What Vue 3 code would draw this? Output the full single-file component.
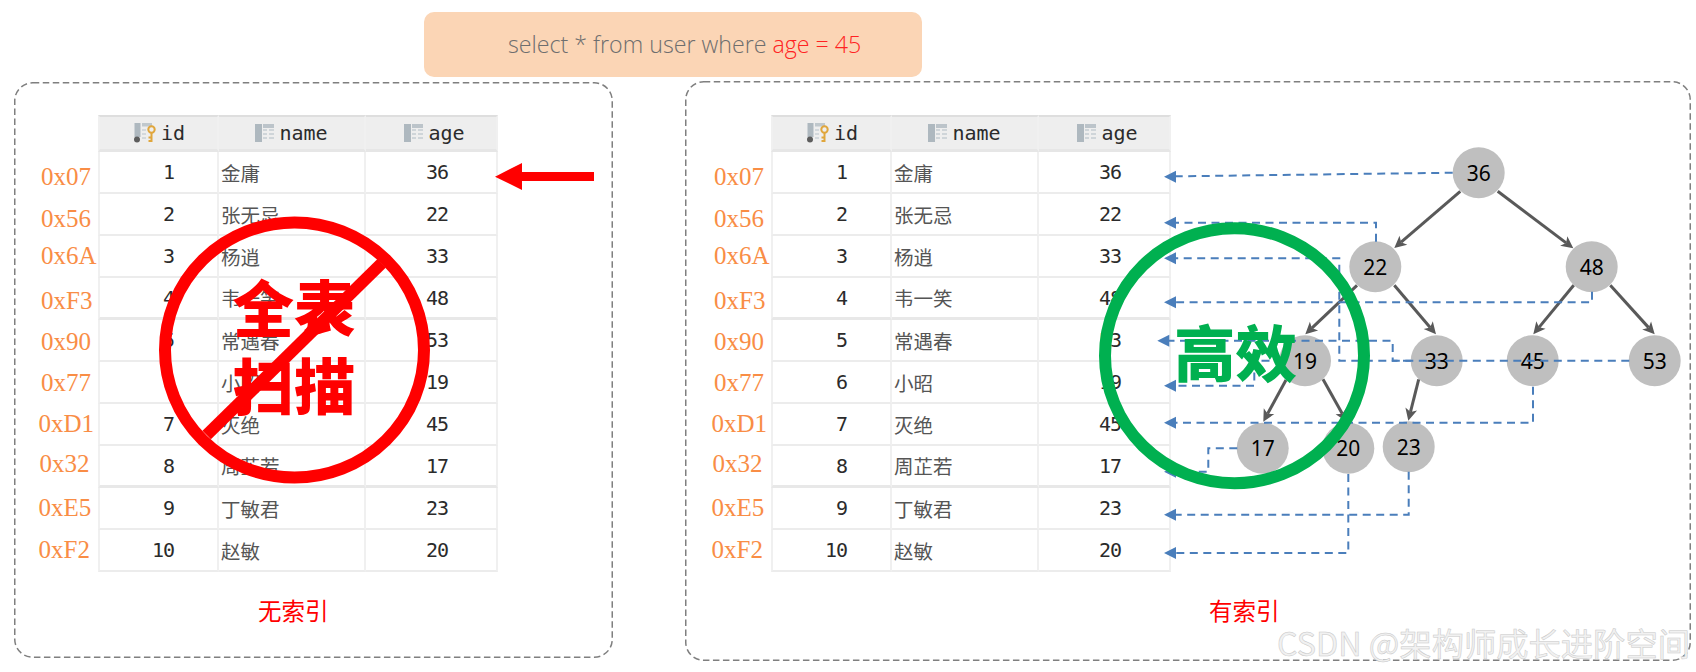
<script setup>
const rows = [
  { id: 1, name: '金庸', age: 36, addr: '0x07', lx: 41, cy: 177 },
  { id: 2, name: '张无忌', age: 22, addr: '0x56', lx: 41, cy: 219 },
  { id: 3, name: '杨逍', age: 33, addr: '0x6A', lx: 41, cy: 256 },
  { id: 4, name: '韦一笑', age: 48, addr: '0xF3', lx: 41, cy: 301 },
  { id: 5, name: '常遇春', age: 53, addr: '0x90', lx: 41, cy: 342 },
  { id: 6, name: '小昭', age: 19, addr: '0x77', lx: 41, cy: 383 },
  { id: 7, name: '灭绝', age: 45, addr: '0xD1', lx: 38.5, cy: 424 },
  { id: 8, name: '周芷若', age: 17, addr: '0x32', lx: 39.5, cy: 464 },
  { id: 9, name: '丁敏君', age: 23, addr: '0xE5', lx: 38.5, cy: 508 },
  { id: 10, name: '赵敏', age: 20, addr: '0xF2', lx: 38.5, cy: 550 }
]
const labels = rows.map(r => ({ text: r.addr, style: { left: r.lx - 98 + 'px', top: r.cy - 115 - 15 + 'px' } }))

const nodes = [
  { t: 36, x: 1478.7, y: 172.7 }, { t: 22, x: 1375.3, y: 266.7 }, { t: 48, x: 1591.7, y: 266.7 },
  { t: 19, x: 1305, y: 360.7 }, { t: 33, x: 1436.7, y: 360.7 }, { t: 45, x: 1532.7, y: 360.7 },
  { t: 53, x: 1654.7, y: 360.7 }, { t: 17, x: 1262.7, y: 448.3 }, { t: 20, x: 1348.3, y: 448.3 },
  { t: 23, x: 1408.7, y: 446.7 }
]

const edgeData = [
  [1460.3, 191.3, 1394.3, 248], [1497.7, 191.3, 1573.3, 248.3], [1357, 285.3, 1305.3, 334.3],
  [1394.3, 285.3, 1436, 334.3], [1573.7, 285.3, 1533.3, 334.3], [1610.3, 285.3, 1654.7, 334.3],
  [1286, 380, 1263.3, 421.7], [1323, 379.3, 1346.7, 421.7], [1418.7, 379.3, 1408.3, 420.7]
]
const edges = edgeData.map(([x1, y1, x2, y2]) => {
  const d = Math.hypot(x2 - x1, y2 - y1)
  const ux = (x2 - x1) / d
  const uy = (y2 - y1) / d
  const bx = x2 - ux * 12
  const by = y2 - uy * 12
  return {
    line: { x1, y1, x2: x2 - ux * 9, y2: y2 - uy * 9 },
    head: `${x2},${y2} ${bx - uy * 6},${by + ux * 6} ${x2 - ux * 9},${y2 - uy * 9} ${bx + uy * 6},${by - ux * 6}`
  }
})

const linkData = [
  '1452.7,172.7 1172,176.4',
  '1376,241.7 1376,222.7 1172,222.7',
  '1629.3,360.7 1339.3,360.7 1339.3,258.3 1172,258.3',
  '1592,291.7 1592,302.3 1172,302.3',
  '1411,360.7 1392.7,360.7 1392.7,340.7 1165,340.7',
  '1283,360.7 1254.3,360.7 1254.3,385.7 1172,385.7',
  '1533,386.7 1533,422.7 1172,422.7',
  '1237.3,448.3 1208.3,448.3 1208.3,471.7 1172,471.7',
  '1408.7,471.7 1408.7,514.7 1172,514.7',
  '1348.3,474 1348.3,553 1172,553'
]
const tips = [
  [1164, 176.7], [1164, 222.7], [1164, 258.3], [1164, 302.3], [1157.3, 340.7],
  [1164, 385.7], [1164, 422.7], [1164, 471.7], [1164, 514.7], [1164, 553]
]
const tipPolys = tips.map(([x, y]) => `${x},${y} ${x + 12},${y - 6} ${x + 12},${y + 6}`)
</script>

<template>
  <div class="page">
    <div class="sql">select * from user where <span class="hot">age = 45</span></div>

    <div class="panels">
      <section class="panel panel-left">
        <svg class="frame" width="599" height="576"><rect x="0.75" y="0.75" width="597.5" height="574.5" rx="18" /></svg>
        <div class="table-wrap">
          <span v-for="l in labels" :key="l.text" class="addr" :style="l.style">{{ l.text }}</span>
          <div class="tbl">
            <div class="cell head head-id">
              <svg class="ico" width="22" height="20" viewBox="0 0 22 20">
                <rect x="0.5" y="0" width="6" height="14" fill="#aeb8bf" />
                <rect x="8" y="0" width="10" height="3.5" fill="#c0c8cd" />
                <rect x="8" y="6" width="4" height="2" fill="#d3d8dc" />
                <rect x="8" y="10" width="4" height="2" fill="#d3d8dc" />
                <rect x="8" y="14" width="4" height="2" fill="#d3d8dc" />
                <circle cx="3" cy="16.5" r="3" fill="#5d5d5d" />
                <circle cx="17.5" cy="6.5" r="3.2" fill="none" stroke="#e0a63c" stroke-width="2" />
                <path d="M17.5 9.5V19M17.5 14.5H14.5M17.5 18H14.5" fill="none" stroke="#e0a63c" stroke-width="2" />
              </svg>
              id
            </div>
            <div class="cell head">
              <svg class="ico" width="19" height="18" viewBox="0 0 19 18">
                <rect width="7" height="18" fill="#aeb8bf" />
                <rect x="8" width="11" height="4" fill="#bcc4ca" />
                <path d="M8 6H12M14 6H19M8 10H12M14 10H19M8 14H12M14 14H19" stroke="#cfd5d9" stroke-width="2" />
              </svg>
              name
            </div>
            <div class="cell head head-age">
              <svg class="ico" width="19" height="18" viewBox="0 0 19 18">
                <rect width="7" height="18" fill="#aeb8bf" />
                <rect x="8" width="11" height="4" fill="#bcc4ca" />
                <path d="M8 6H12M14 6H19M8 10H12M14 10H19M8 14H12M14 14H19" stroke="#cfd5d9" stroke-width="2" />
              </svg>
              age
            </div>
            <template v-for="(r, i) in rows" :key="r.id">
              <div class="cell num idc" :class="{ thick: i === 3 || i === 7 }">{{ r.id }}</div>
              <div class="cell txt" :class="{ thick: i === 3 || i === 7 }">{{ r.name }}</div>
              <div class="cell num agec" :class="{ thick: i === 3 || i === 7 }">{{ r.age }}</div>
            </template>
          </div>
        </div>
        <p class="caption caption-left">无索引</p>
      </section>

      <section class="panel panel-right">
        <svg class="frame" width="1006" height="580"><rect x="0.75" y="0.75" width="1004.5" height="578.5" rx="18" /></svg>
        <div class="table-wrap">
          <span v-for="l in labels" :key="l.text" class="addr" :style="l.style">{{ l.text }}</span>
          <div class="tbl">
            <div class="cell head head-id">
              <svg class="ico" width="22" height="20" viewBox="0 0 22 20">
                <rect x="0.5" y="0" width="6" height="14" fill="#aeb8bf" />
                <rect x="8" y="0" width="10" height="3.5" fill="#c0c8cd" />
                <rect x="8" y="6" width="4" height="2" fill="#d3d8dc" />
                <rect x="8" y="10" width="4" height="2" fill="#d3d8dc" />
                <rect x="8" y="14" width="4" height="2" fill="#d3d8dc" />
                <circle cx="3" cy="16.5" r="3" fill="#5d5d5d" />
                <circle cx="17.5" cy="6.5" r="3.2" fill="none" stroke="#e0a63c" stroke-width="2" />
                <path d="M17.5 9.5V19M17.5 14.5H14.5M17.5 18H14.5" fill="none" stroke="#e0a63c" stroke-width="2" />
              </svg>
              id
            </div>
            <div class="cell head">
              <svg class="ico" width="19" height="18" viewBox="0 0 19 18">
                <rect width="7" height="18" fill="#aeb8bf" />
                <rect x="8" width="11" height="4" fill="#bcc4ca" />
                <path d="M8 6H12M14 6H19M8 10H12M14 10H19M8 14H12M14 14H19" stroke="#cfd5d9" stroke-width="2" />
              </svg>
              name
            </div>
            <div class="cell head head-age">
              <svg class="ico" width="19" height="18" viewBox="0 0 19 18">
                <rect width="7" height="18" fill="#aeb8bf" />
                <rect x="8" width="11" height="4" fill="#bcc4ca" />
                <path d="M8 6H12M14 6H19M8 10H12M14 10H19M8 14H12M14 14H19" stroke="#cfd5d9" stroke-width="2" />
              </svg>
              age
            </div>
            <template v-for="(r, i) in rows" :key="r.id">
              <div class="cell num idc" :class="{ thick: i === 3 || i === 7 }">{{ r.id }}</div>
              <div class="cell txt" :class="{ thick: i === 3 || i === 7 }">{{ r.name }}</div>
              <div class="cell num agec" :class="{ thick: i === 3 || i === 7 }">{{ r.age }}</div>
            </template>
          </div>
        </div>
        <p class="caption caption-right">有索引</p>
      </section>
    </div>

    <svg class="overlay" width="1696" height="672" viewBox="0 0 1696 672">
      <!-- red pointer -->
      <polygon points="495,176.7 522,163 522,172 594,172 594,181 522,181 522,190" fill="#ff0000" />

      <!-- forbidden sign -->
      <ellipse cx="294.5" cy="350" rx="129.5" ry="127.5" fill="none" stroke="#ff0000" stroke-width="12" />
      <line x1="206.7" y1="435" x2="381.7" y2="263.3" stroke="#ff0000" stroke-width="12" />
      <text class="big" x="294" y="332" fill="#ff0000">全表</text>
      <text class="big" x="294" y="410" fill="#ff0000">扫描</text>

      <!-- B+ tree -->
      <g v-for="n in nodes" :key="n.t">
        <ellipse :cx="n.x" :cy="n.y" rx="26" ry="25.5" fill="#bfbfbf" />
        <text class="node" :x="n.x" :y="n.y + 8">{{ n.t }}</text>
      </g>
      <g v-for="(e, i) in edges" :key="i">
        <line v-bind="e.line" stroke="#595959" stroke-width="3" />
        <polygon :points="e.head" fill="#595959" />
      </g>
      <polyline v-for="(p, i) in linkData" :key="i" :points="p" fill="none" stroke="#4a7ebb" stroke-width="2" stroke-dasharray="8 5.5" />
      <polygon v-for="(p, i) in tipPolys" :key="i" :points="p" fill="#4a7ebb" />

      <!-- efficient sign -->
      <ellipse cx="1234.5" cy="355.7" rx="129.5" ry="127.5" fill="none" stroke="#00b050" stroke-width="12" />
      <text class="big" x="1235.5" y="377" fill="#00b050">高效</text>
    </svg>

    <div class="watermark">CSDN @架构师成长进阶空间</div>
  </div>
</template>

<style>
html, body { margin: 0; background: #fff; }
</style>

<style scoped>
.page {
  position: relative;
  width: 1696px;
  height: 672px;
  overflow: hidden;
  background: #fff;
  padding-top: 12px;
  box-sizing: border-box;
}
.sql {
  margin-left: 424px;
  width: 498px;
  height: 65px;
  border-radius: 10px;
  background: #fbd5b5;
  box-sizing: border-box;
  padding-left: 84px;
  font: 300 23.2px/65px "Open Sans", "Noto Sans", sans-serif;
  color: #6e6e6e;
  white-space: nowrap;
}
.hot { color: #ff2222; }
.panels {
  display: flex;
  align-items: flex-start;
  margin-top: 4px;
  padding-left: 14px;
  gap: 72px;
}
.panel { position: relative; box-sizing: border-box; }
.panel-left { width: 599px; height: 576px; margin-top: 1px; padding: 33px 0 0 84px; }
.panel-right { width: 1006px; height: 580px; padding: 34px 0 0 86px; }
.frame { position: absolute; left: 0; top: 0; }
.frame rect { fill: none; stroke: #7f7f7f; stroke-width: 1.5; stroke-dasharray: 6.5 3.5; }
.table-wrap { position: relative; width: 400px; }
.addr {
  position: absolute;
  height: 30px;
  font: 25px/30px "Liberation Serif", serif;
  color: #f98d45;
  white-space: nowrap;
}
.tbl {
  display: grid;
  grid-template-columns: 121px 147px 132px;
  grid-template-rows: 37px;
  grid-auto-rows: 42px;
}
.cell {
  box-sizing: border-box;
  border-right: 2px solid #f0f0f0;
  border-bottom: 2px solid #ececec;
  display: flex;
  align-items: center;
}
.cell:nth-child(3n + 1) { border-left: 2px solid #f0f0f0; }
.head {
  background: #eeeeee;
  border-top: 2px solid #dedede;
  border-bottom: 3px solid #e6e6e6;
  justify-content: center;
  gap: 5px;
  font: 20px "DejaVu Sans Mono", monospace;
  color: #2b2b2b;
}
.head-id { padding-left: 2px; }
.head-age { padding-left: 7px; }
.ico { flex: none; }
.num {
  justify-content: flex-end;
  font: 20px "DejaVu Sans Mono", monospace;
  letter-spacing: -1px;
  color: #2b2b2b;
}
.idc { padding-right: 43px; }
.agec { padding-right: 48px; }
.txt {
  padding-left: 2px;
  font: 19.5px "Noto Sans CJK SC", sans-serif;
  color: #555;
}
.thick { border-bottom-width: 3px; border-bottom-color: #e8e8e8; }
.caption {
  margin: 0;
  font: 23.5px/30px "Noto Sans CJK SC", sans-serif;
  color: #ff0000;
  white-space: nowrap;
}
.caption-left { margin: 23px 0 0 160px; }
.caption-right { margin: 23px 0 0 438px; }
.overlay { position: absolute; left: 0; top: 0; pointer-events: none; }
.big {
  font: 900 61.5px "Noto Sans CJK SC", sans-serif;
  text-anchor: middle;
}
.node {
  font: 21px "Noto Sans", sans-serif;
  text-anchor: middle;
  fill: #000;
}
.watermark {
  position: absolute;
  left: 1277px;
  top: 620px;
  font: 32.3px/44px "Noto Sans CJK SC", sans-serif;
  color: #f1f1f1;
  -webkit-text-stroke: 0.5px #c8c8c8;
  white-space: nowrap;
}
</style>
